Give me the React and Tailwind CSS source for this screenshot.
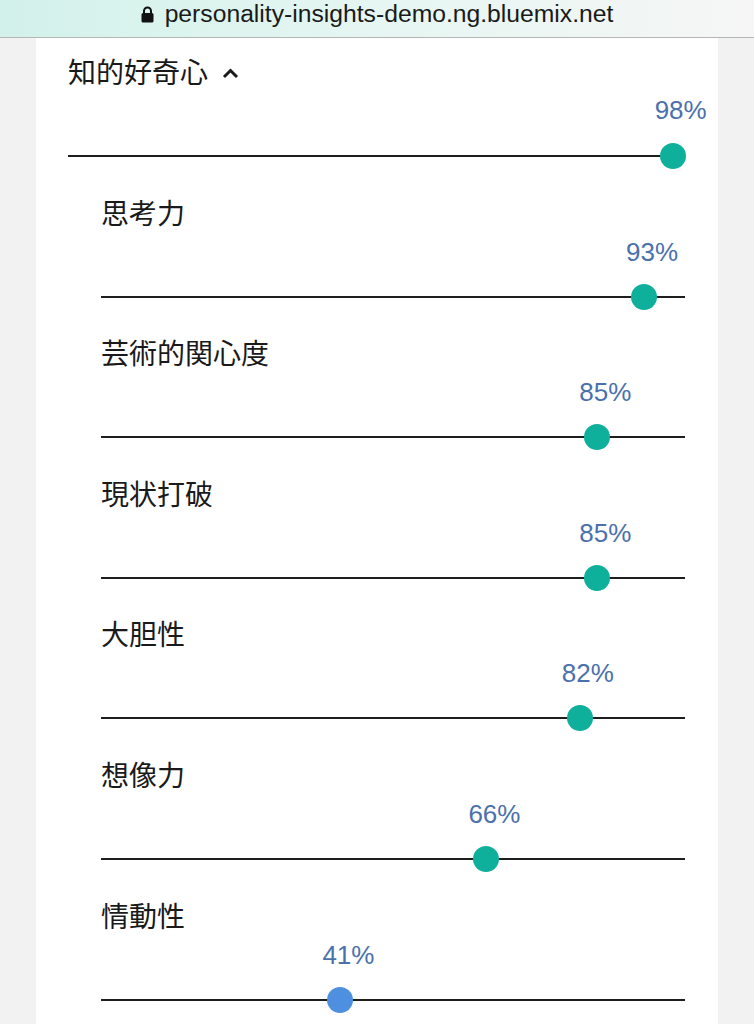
const subs = [
  { name: "思考力", pct: 93 },
  { name: "芸術的関心度", pct: 85 },
  { name: "現状打破", pct: 85 },
  { name: "大胆性", pct: 82 },
  { name: "想像力", pct: 66 },
  { name: "情動性", pct: 41, low: true },
];

const jp = { fontFamily: '"Noto Sans CJK JP", "Noto Sans", sans-serif' };
const lat = { fontFamily: '"Liberation Sans", Arial, sans-serif' };

// percentage label + slider line with a dot
const Slider = ({ pct, low, gap }) => (
  <div className="flex flex-col">
    <div className="relative h-[40px]">
      <span
        className="absolute top-0 -translate-x-1/2 text-[26px] leading-[40px] text-[#4b71ad]"
        style={{ ...lat, left: `calc(${pct}% + 8px)` }}
      >
        {pct}%
      </span>
    </div>
    <div className={`relative h-[26px] ${gap}`}>
      <div className="absolute left-0 right-0 top-[12px] h-[2px] bg-[#1e1e1e]" />
      <div
        className={`absolute top-0 w-[26px] h-[26px] -translate-x-1/2 rounded-full ${
          low ? "bg-[#4f8fe0]" : "bg-[#0fb09b]"
        }`}
        style={{ left: `${pct}%` }}
      />
    </div>
  </div>
);

export default function App() {
  return (
    <div className="w-[754px] h-[1024px] overflow-hidden bg-[#f2f2f2] flex flex-col">
      <div className="h-[38px] shrink-0 flex justify-center items-start border-b border-[#b5b5b5] bg-gradient-to-r from-[#d2f1ea] via-[#e6f6f2] to-[#f6f6f6]">
        <div className="flex items-center gap-[11px] h-[28px]">
          <svg width="13" height="17" viewBox="0 0 13 17" className="mt-[1px]">
            <path d="M3 7.5V5a3.5 3.5 0 0 1 7 0v2.5" fill="none" stroke="#111" strokeWidth="2" />
            <rect x="0.5" y="7" width="12" height="9.5" rx="1.5" fill="#111" />
          </svg>
          <span className="text-[24.7px] leading-[28px] text-[#1a1a1a]" style={lat}>
            personality-insights-demo.ng.bluemix.net
          </span>
        </div>
      </div>
      <div className="ml-[36px] w-[682px] flex-1 bg-white pt-[14px] pl-[32px] pr-[33px]">
        <div className="h-[38px] flex items-center gap-[14px]">
          <span className="text-[28px] leading-[38px] text-[#1a1a1a]" style={jp}>
            知的好奇心
          </span>
          <svg width="17" height="11" viewBox="0 0 17 11" className="mt-[5px]">
            <path d="M2 9l6.5-6.5L15 9" fill="none" stroke="#1a1a1a" strokeWidth="3" />
          </svg>
        </div>
        <Slider pct={98} gap="mt-[13px]" />
        <div className="pl-[33px] flex flex-col gap-[22.6px] pt-[22.6px]">
          {subs.map((s) => (
            <div key={s.name} className="flex flex-col">
              <div className="h-[40px] text-[28px] leading-[40px] text-[#1a1a1a]" style={jp}>
                {s.name}
              </div>
              <Slider pct={s.pct} low={s.low} gap="mt-[12px]" />
            </div>
          ))}
        </div>
      </div>
    </div>
  );
}
